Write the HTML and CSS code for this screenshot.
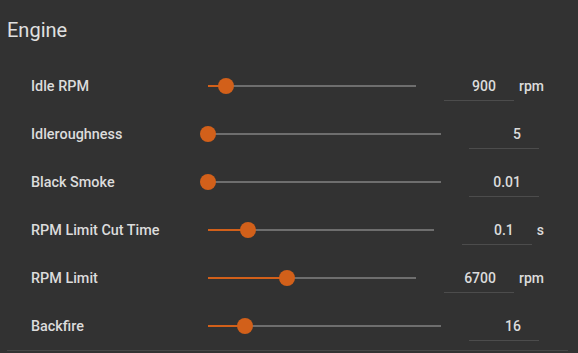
FILE: index.html
```html
<!DOCTYPE html>
<html>
<head>
<meta charset="utf-8">
<link rel="stylesheet" href="styles.css">
</head>
<body>
<div class="header"><h1 class="title">Engine</h1></div>
<div class="section">
  <div class="row">
    <div class="label">Idle RPM</div>
    <div class="slider"><div class="track"></div><div class="fill" style="width:8.7%"></div><div class="thumb" style="left:8.7%"></div></div>
    <div class="value">900</div>
    <div class="unit">rpm</div>
  </div>
  <div class="row">
    <div class="label">Idleroughness</div>
    <div class="slider"><div class="track"></div><div class="fill" style="width:0%"></div><div class="thumb" style="left:0%"></div></div>
    <div class="value">5</div>
    <div class="unit"></div>
  </div>
  <div class="row">
    <div class="label">Black Smoke</div>
    <div class="slider"><div class="track"></div><div class="fill" style="width:0%"></div><div class="thumb" style="left:0%"></div></div>
    <div class="value">0.01</div>
    <div class="unit"></div>
  </div>
  <div class="row">
    <div class="label">RPM Limit Cut Time</div>
    <div class="slider"><div class="track"></div><div class="fill" style="width:17.7%"></div><div class="thumb" style="left:17.7%"></div></div>
    <div class="value">0.1</div>
    <div class="unit">s</div>
  </div>
  <div class="row">
    <div class="label">RPM Limit</div>
    <div class="slider"><div class="track"></div><div class="fill" style="width:38%"></div><div class="thumb" style="left:38%"></div></div>
    <div class="value">6700</div>
    <div class="unit">rpm</div>
  </div>
  <div class="row">
    <div class="label">Backfire</div>
    <div class="slider"><div class="track"></div><div class="fill" style="width:15.9%"></div><div class="thumb" style="left:15.9%"></div></div>
    <div class="value">16</div>
    <div class="unit"></div>
  </div>
</div>
</body>
</html>
```
FILE: styles.css
```css
html, body {
  margin: 0;
  padding: 0;
  background: #323232;
  font-family: Roboto, "Liberation Sans", sans-serif;
  color: #dcdcdc;
  width: 578px;
  height: 353px;
  overflow: hidden;
}
.header {
  padding: 18px 0 0 7px;
  height: 44px;
  box-sizing: border-box;
}
.title {
  margin: 0;
  font-size: 20px;
  line-height: 24px;
  font-weight: 400;
  color: #e0e0e0;
}
.section {
  margin: 0 10px 0 7px;
  padding: 18px 24px 0 24px;
  border-bottom: 1px solid #474747;
}
.row {
  display: flex;
  align-items: center;
  height: 48px;
  font-size: 14px;
  font-weight: 500;
}
.label {
  width: 177px;
  flex: none;
  font-size: 14.4px;
}
.slider {
  flex: 1;
  position: relative;
  height: 16px;
}
.track {
  position: absolute;
  left: 0;
  right: 0;
  top: 7px;
  height: 2px;
  background: #6e6e6e;
}
.fill {
  position: absolute;
  left: 0;
  top: 7px;
  height: 2px;
  background: #d2601a;
}
.thumb {
  position: absolute;
  top: 0;
  width: 16px;
  height: 16px;
  margin-left: -8px;
  border-radius: 50%;
  background: #d2601a;
}
.value {
  flex: none;
  width: 70px;
  height: 29px;
  line-height: 28px;
  margin-top: 1px;
  margin-left: 28px;
  padding-right: 18px;
  box-sizing: border-box;
  text-align: right;
  border-bottom: 1px solid #4c4c4c;
}
.unit {
  flex: none;
  margin-left: 5px;
}
```
